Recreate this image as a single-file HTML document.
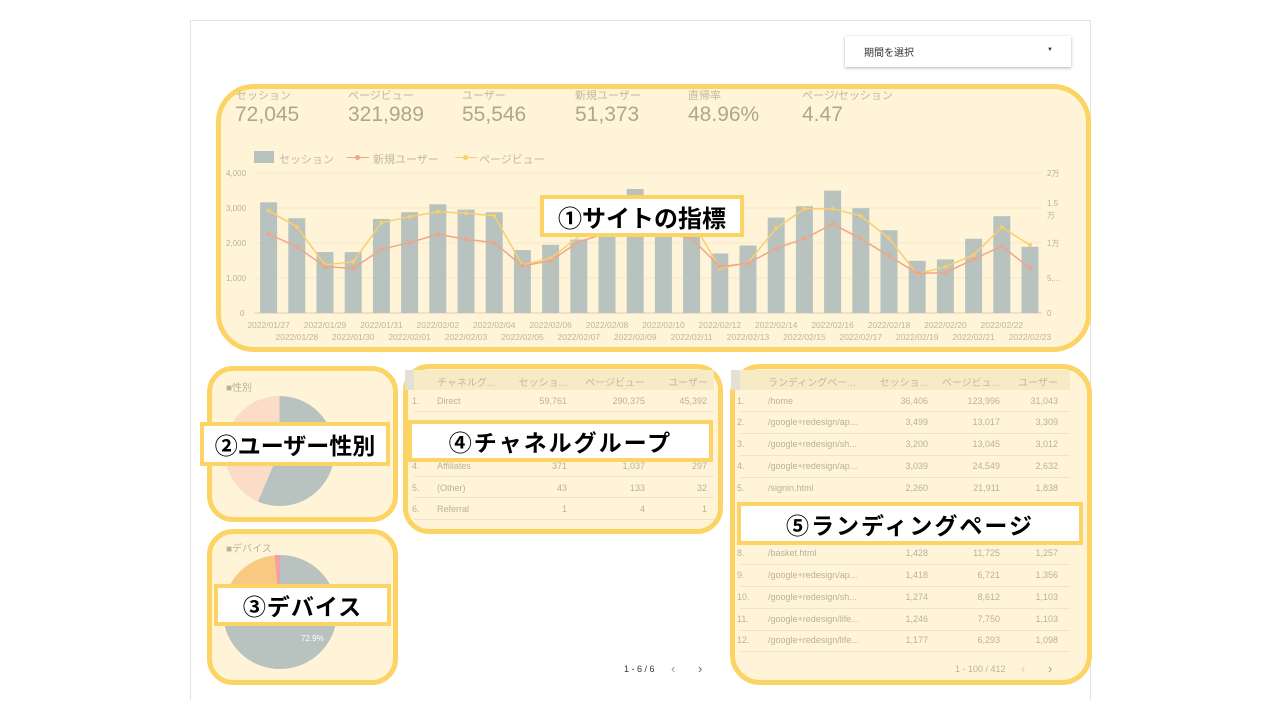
<!DOCTYPE html>
<html><head><meta charset="utf-8"><style>
*{margin:0;padding:0;box-sizing:border-box}
body{width:1280px;height:720px;background:#fff;position:relative;overflow:hidden;font-family:"Liberation Sans","Noto Sans CJK JP",sans-serif}
.a{position:absolute}
.box{position:absolute;background:#fff4d8;border:5px solid #fcd465}
.lbl{position:absolute;background:#fff;border:4px solid #fcd465;font-weight:bold;color:#000;font-size:23px;display:flex;align-items:center;justify-content:center;font-family:"Liberation Sans","Noto Sans CJK JP",sans-serif;white-space:nowrap}
.t{color:#b9b19c;font-size:9px;position:absolute;white-space:nowrap}
.r{text-align:right}
.kh{color:#c0b8a2;font-size:11px;position:absolute;white-space:nowrap}
.kv{color:#aea690;font-size:21px;position:absolute}
</style></head><body>
<div class="a" style="left:190px;top:20px;width:901px;height:680px;border:1px solid #e2e2e2;border-bottom:none"></div>
<div class="a" style="left:845px;top:36px;width:226px;height:31px;background:#fff;box-shadow:0 1px 3px rgba(0,0,0,.3);font-size:10px;color:#333;padding:8px 0 0 19px">期間を選択<span style="position:absolute;right:18px;top:11px;font-size:6px">▼</span></div>

<div class="box" style="left:216px;top:84px;width:875px;height:268px;border-radius:38px"></div>
<div class="box" style="left:207px;top:366px;width:191px;height:156px;border-radius:26px"></div>
<div class="box" style="left:207px;top:529px;width:191px;height:156px;border-radius:26px"></div>
<div class="box" style="left:403px;top:364px;width:320px;height:170px;border-radius:26px"></div>
<div class="box" style="left:730px;top:364px;width:362px;height:321px;border-radius:30px"></div>

<div class="kh" style="left:236px;top:87px">セッション</div><div class="kv" style="left:235px;top:103px">72,045</div>
<div class="kh" style="left:348px;top:87px">ページビュー</div><div class="kv" style="left:348px;top:103px">321,989</div>
<div class="kh" style="left:462px;top:87px">ユーザー</div><div class="kv" style="left:462px;top:103px">55,546</div>
<div class="kh" style="left:575px;top:87px">新規ユーザー</div><div class="kv" style="left:575px;top:103px">51,373</div>
<div class="kh" style="left:688px;top:87px">直帰率</div><div class="kv" style="left:688px;top:103px">48.96%</div>
<div class="kh" style="left:802px;top:87px">ページ/セッション</div><div class="kv" style="left:802px;top:103px">4.47</div>

<div class="a" style="left:254px;top:151px;width:20px;height:12px;background:#b8c2be"></div>
<div class="kh" style="left:279px;top:151px">セッション</div>
<div class="a" style="left:347px;top:157px;width:22px;height:1px;background:#f0a58a"></div><div class="a" style="left:355px;top:155px;width:5px;height:5px;border-radius:50%;background:#f0a58a"></div>
<div class="kh" style="left:373px;top:151px">新規ユーザー</div>
<div class="a" style="left:455px;top:157px;width:22px;height:1px;background:#f8cf6c"></div><div class="a" style="left:463px;top:155px;width:5px;height:5px;border-radius:50%;background:#f8cf6c"></div>
<div class="kh" style="left:479px;top:151px">ページビュー</div>

<svg class="a" style="left:0;top:0" width="1280" height="720">
<g stroke="#f3e7c8" stroke-width="1"><line x1="254" y1="173" x2="1042" y2="173"/><line x1="254" y1="208" x2="1042" y2="208"/><line x1="254" y1="243" x2="1042" y2="243"/><line x1="254" y1="278" x2="1042" y2="278"/></g>
<line x1="254" y1="313" x2="1042" y2="313" stroke="#d8d0ba"/>
<g fill="#b8c2be">
<rect x="260.1" y="202.3" width="17" height="110.7"/><rect x="288.3" y="218.2" width="17" height="94.8"/><rect x="316.5" y="252.1" width="17" height="60.9"/><rect x="344.7" y="252.1" width="17" height="60.9"/><rect x="372.9" y="218.9" width="17" height="94.1"/><rect x="401.1" y="212.2" width="17" height="100.8"/><rect x="429.3" y="204.3" width="17" height="108.7"/><rect x="457.5" y="209.6" width="17" height="103.4"/><rect x="485.7" y="212.2" width="17" height="100.8"/><rect x="513.9" y="250.1" width="17" height="62.9"/><rect x="542.1" y="244.8" width="17" height="68.2"/><rect x="570.3" y="239.5" width="17" height="73.5"/><rect x="598.5" y="232.5" width="17" height="80.5"/><rect x="626.7" y="189" width="17" height="124"/><rect x="654.9" y="232.5" width="17" height="80.5"/><rect x="683.1" y="236" width="17" height="77"/><rect x="711.3" y="253.5" width="17" height="59.5"/><rect x="739.5" y="245.5" width="17" height="67.5"/><rect x="767.7" y="217.6" width="17" height="95.4"/><rect x="795.9" y="206.2" width="17" height="106.8"/><rect x="824.1" y="190.6" width="17" height="122.4"/><rect x="852.3" y="208.2" width="17" height="104.8"/><rect x="880.5" y="230.2" width="17" height="82.8"/><rect x="908.7" y="260.8" width="17" height="52.2"/><rect x="936.9" y="259.4" width="17" height="53.6"/><rect x="965.1" y="238.8" width="17" height="74.2"/><rect x="993.3" y="216.2" width="17" height="96.8"/><rect x="1021.5" y="246.8" width="17" height="66.2"/>
</g>
<polyline fill="none" stroke="#f8cf6c" stroke-width="1.5" points="268.6,210.7 296.8,226.7 325,265 353.2,261.7 381.4,222.7 409.6,216.7 437.8,211.7 466,213.3 494.2,215.7 522.4,265 550.6,258.3 578.8,236.7 607,220 635.2,208 663.4,210 691.6,220 719.8,268.3 748,262.7 776.2,228.3 804.4,208.7 832.6,208.7 860.8,216 889,238.3 917.2,274 945.4,266.7 973.6,255 1001.8,227.3 1030,245"/>
<polyline fill="none" stroke="#f0a58a" stroke-width="1.5" points="268.6,234 296.8,246.7 325,266.7 353.2,268.3 381.4,249.3 409.6,242.7 437.8,234.3 466,239.3 494.2,242.7 522.4,266 550.6,260.7 578.8,241.7 607,233.3 635.2,226.7 663.4,233.3 691.6,238.3 719.8,266.7 748,263.3 776.2,248.3 804.4,238.7 832.6,224 860.8,238.7 889,256 917.2,273.3 945.4,272.7 973.6,259.3 1001.8,246 1030,268.3"/>
<g fill="#f8cf6c"><circle cx="268.6" cy="210.7" r="2"/><circle cx="296.8" cy="226.7" r="2"/><circle cx="325" cy="265" r="2"/><circle cx="353.2" cy="261.7" r="2"/><circle cx="381.4" cy="222.7" r="2"/><circle cx="409.6" cy="216.7" r="2"/><circle cx="437.8" cy="211.7" r="2"/><circle cx="466" cy="213.3" r="2"/><circle cx="494.2" cy="215.7" r="2"/><circle cx="522.4" cy="265" r="2"/><circle cx="550.6" cy="258.3" r="2"/><circle cx="719.8" cy="268.3" r="2"/><circle cx="748" cy="262.7" r="2"/><circle cx="776.2" cy="228.3" r="2"/><circle cx="804.4" cy="208.7" r="2"/><circle cx="832.6" cy="208.7" r="2"/><circle cx="860.8" cy="216" r="2"/><circle cx="889" cy="238.3" r="2"/><circle cx="917.2" cy="274" r="2"/><circle cx="945.4" cy="266.7" r="2"/><circle cx="973.6" cy="255" r="2"/><circle cx="1001.8" cy="227.3" r="2"/><circle cx="1030" cy="245" r="2"/></g>
<g fill="#f0a58a"><circle cx="268.6" cy="234" r="2"/><circle cx="296.8" cy="246.7" r="2"/><circle cx="325" cy="266.7" r="2"/><circle cx="353.2" cy="268.3" r="2"/><circle cx="381.4" cy="249.3" r="2"/><circle cx="409.6" cy="242.7" r="2"/><circle cx="437.8" cy="234.3" r="2"/><circle cx="466" cy="239.3" r="2"/><circle cx="494.2" cy="242.7" r="2"/><circle cx="522.4" cy="266" r="2"/><circle cx="550.6" cy="260.7" r="2"/><circle cx="719.8" cy="266.7" r="2"/><circle cx="748" cy="263.3" r="2"/><circle cx="776.2" cy="248.3" r="2"/><circle cx="804.4" cy="238.7" r="2"/><circle cx="832.6" cy="224" r="2"/><circle cx="860.8" cy="238.7" r="2"/><circle cx="889" cy="256" r="2"/><circle cx="917.2" cy="273.3" r="2"/><circle cx="945.4" cy="272.7" r="2"/><circle cx="973.6" cy="259.3" r="2"/><circle cx="1001.8" cy="246" r="2"/><circle cx="1030" cy="268.3" r="2"/></g>
<g fill="#b9b19c" font-size="8" font-family="Liberation Sans">
<text x="226" y="176">4,000</text><text x="226" y="211">3,000</text><text x="226" y="246">2,000</text><text x="226" y="281">1,000</text><text x="240" y="316">0</text>
<text x="1047" y="176">2万</text><text x="1047" y="206">1.5</text><text x="1047" y="218">万</text><text x="1047" y="246">1万</text><text x="1047" y="281">5,...</text><text x="1047" y="316">0</text>
</g>
<g fill="#bdb59f" font-size="8.5" font-family="Liberation Sans" text-anchor="middle">
<text x="268.6" y="328">2022/01/27</text><text x="325" y="328">2022/01/29</text><text x="381.4" y="328">2022/01/31</text><text x="437.8" y="328">2022/02/02</text><text x="494.2" y="328">2022/02/04</text><text x="550.6" y="328">2022/02/06</text><text x="607" y="328">2022/02/08</text><text x="663.4" y="328">2022/02/10</text><text x="719.8" y="328">2022/02/12</text><text x="776.2" y="328">2022/02/14</text><text x="832.6" y="328">2022/02/16</text><text x="889" y="328">2022/02/18</text><text x="945.4" y="328">2022/02/20</text><text x="1001.8" y="328">2022/02/22</text>
<text x="296.8" y="340">2022/01/28</text><text x="353.2" y="340">2022/01/30</text><text x="409.6" y="340">2022/02/01</text><text x="466" y="340">2022/02/03</text><text x="522.4" y="340">2022/02/05</text><text x="578.8" y="340">2022/02/07</text><text x="635.2" y="340">2022/02/09</text><text x="691.6" y="340">2022/02/11</text><text x="748" y="340">2022/02/13</text><text x="804.4" y="340">2022/02/15</text><text x="860.8" y="340">2022/02/17</text><text x="917.2" y="340">2022/02/19</text><text x="973.6" y="340">2022/02/21</text><text x="1030" y="340">2022/02/23</text>
</g>
<circle cx="279.5" cy="451" r="55" fill="#fbdcc6"/>
<path d="M279.5,451 L279.5,396 A55,55 0 1,1 258,501.6 Z" fill="#b8c2be"/>
<circle cx="280" cy="612" r="57" fill="#f9c982"/>
<path d="M280,612 L280,555 A57,57 0 1,1 223.5,619.5 Z" fill="#b8c2be"/>
<path d="M280,612 L274.6,555.3 A57,57 0 0,1 280,555 Z" fill="#f2a0a8"/>
<text x="301" y="641" fill="#fff" font-size="8" font-family="Liberation Sans">72.9%</text>
</svg>
<div class="t" style="left:226px;top:379px;font-size:10px">■性別</div>
<div class="t" style="left:226px;top:540px;font-size:10px">■デバイス</div>

<div class="a" style="left:405px;top:370px;width:14px;height:20px;background:#e4e0d4"></div>
<div class="a" style="left:414px;top:370px;width:300px;height:20px;background:#f7ebc6"></div>
<div class="kh" style="left:437px;top:374px;font-size:10px">チャネルグ...</div><div class="kh r" style="left:505px;top:374px;width:62px;font-size:10px">セッショ...</div><div class="kh r" style="left:575px;top:374px;width:70px;font-size:10px">ページビュー</div><div class="kh r" style="left:655px;top:374px;width:53px;font-size:10px">ユーザー</div>
<div class="t" style="left:412px;top:396px">1.</div><div class="t" style="left:437px;top:396px">Direct</div><div class="t r" style="left:507px;top:396px;width:60px">59,761</div><div class="t r" style="left:585px;top:396px;width:60px">290,375</div><div class="t r" style="left:647px;top:396px;width:60px">45,392</div>
<div class="t" style="left:412px;top:461px">4.</div><div class="t" style="left:437px;top:461px">Affiliates</div><div class="t r" style="left:507px;top:461px;width:60px">371</div><div class="t r" style="left:585px;top:461px;width:60px">1,037</div><div class="t r" style="left:647px;top:461px;width:60px">297</div>
<div class="t" style="left:412px;top:483px">5.</div><div class="t" style="left:437px;top:483px">(Other)</div><div class="t r" style="left:507px;top:483px;width:60px">43</div><div class="t r" style="left:585px;top:483px;width:60px">133</div><div class="t r" style="left:647px;top:483px;width:60px">32</div>
<div class="t" style="left:412px;top:504px">6.</div><div class="t" style="left:437px;top:504px">Referral</div><div class="t r" style="left:507px;top:504px;width:60px">1</div><div class="t r" style="left:585px;top:504px;width:60px">4</div><div class="t r" style="left:647px;top:504px;width:60px">1</div>
<div class="a" style="left:414px;top:411px;width:300px;height:1px;background:#f0e4c4"></div><div class="a" style="left:414px;top:476px;width:300px;height:1px;background:#f0e4c4"></div><div class="a" style="left:414px;top:497px;width:300px;height:1px;background:#f0e4c4"></div><div class="a" style="left:414px;top:519px;width:300px;height:1px;background:#f0e4c4"></div>
<div class="a" style="left:624px;top:664px;font-size:9px;color:#333">1 - 6 / 6</div>
<div class="a" style="left:671px;top:661px;font-size:13px;color:#999">‹</div><div class="a" style="left:698px;top:661px;font-size:13px;color:#666">›</div>

<div class="a" style="left:731px;top:370px;width:30px;height:20px;background:#e4e0d4"></div>
<div class="a" style="left:740px;top:370px;width:330px;height:20px;background:#f7ebc6"></div>
<div class="kh" style="left:768px;top:374px;font-size:10px">ランディングペー...</div><div class="kh r" style="left:860px;top:374px;width:68px;font-size:10px">セッショ...</div><div class="kh r" style="left:930px;top:374px;width:70px;font-size:10px">ページビュ...</div><div class="kh r" style="left:1005px;top:374px;width:53px;font-size:10px">ユーザー</div>
<div class="t" style="left:737px;top:396px">1.</div><div class="t" style="left:768px;top:396px">/home</div><div class="t r" style="left:868px;top:396px;width:60px">36,406</div><div class="t r" style="left:940px;top:396px;width:60px">123,996</div><div class="t r" style="left:998px;top:396px;width:60px">31,043</div>
<div class="t" style="left:737px;top:417px">2.</div><div class="t" style="left:768px;top:417px">/google+redesign/ap...</div><div class="t r" style="left:868px;top:417px;width:60px">3,499</div><div class="t r" style="left:940px;top:417px;width:60px">13,017</div><div class="t r" style="left:998px;top:417px;width:60px">3,309</div>
<div class="t" style="left:737px;top:439px">3.</div><div class="t" style="left:768px;top:439px">/google+redesign/sh...</div><div class="t r" style="left:868px;top:439px;width:60px">3,200</div><div class="t r" style="left:940px;top:439px;width:60px">13,045</div><div class="t r" style="left:998px;top:439px;width:60px">3,012</div>
<div class="t" style="left:737px;top:461px">4.</div><div class="t" style="left:768px;top:461px">/google+redesign/ap...</div><div class="t r" style="left:868px;top:461px;width:60px">3,039</div><div class="t r" style="left:940px;top:461px;width:60px">24,549</div><div class="t r" style="left:998px;top:461px;width:60px">2,632</div>
<div class="t" style="left:737px;top:483px">5.</div><div class="t" style="left:768px;top:483px">/signin.html</div><div class="t r" style="left:868px;top:483px;width:60px">2,260</div><div class="t r" style="left:940px;top:483px;width:60px">21,911</div><div class="t r" style="left:998px;top:483px;width:60px">1,838</div>
<div class="t" style="left:737px;top:548px">8.</div><div class="t" style="left:768px;top:548px">/basket.html</div><div class="t r" style="left:868px;top:548px;width:60px">1,428</div><div class="t r" style="left:940px;top:548px;width:60px">11,725</div><div class="t r" style="left:998px;top:548px;width:60px">1,257</div>
<div class="t" style="left:737px;top:570px">9.</div><div class="t" style="left:768px;top:570px">/google+redesign/ap...</div><div class="t r" style="left:868px;top:570px;width:60px">1,418</div><div class="t r" style="left:940px;top:570px;width:60px">6,721</div><div class="t r" style="left:998px;top:570px;width:60px">1,356</div>
<div class="t" style="left:737px;top:592px">10.</div><div class="t" style="left:768px;top:592px">/google+redesign/sh...</div><div class="t r" style="left:868px;top:592px;width:60px">1,274</div><div class="t r" style="left:940px;top:592px;width:60px">8,612</div><div class="t r" style="left:998px;top:592px;width:60px">1,103</div>
<div class="t" style="left:737px;top:614px">11.</div><div class="t" style="left:768px;top:614px">/google+redesign/life...</div><div class="t r" style="left:868px;top:614px;width:60px">1,246</div><div class="t r" style="left:940px;top:614px;width:60px">7,750</div><div class="t r" style="left:998px;top:614px;width:60px">1,103</div>
<div class="t" style="left:737px;top:635px">12.</div><div class="t" style="left:768px;top:635px">/google+redesign/life...</div><div class="t r" style="left:868px;top:635px;width:60px">1,177</div><div class="t r" style="left:940px;top:635px;width:60px">6,293</div><div class="t r" style="left:998px;top:635px;width:60px">1,098</div>
<div class="a" style="left:740px;top:411px;width:330px;height:1px;background:#f0e4c4"></div><div class="a" style="left:740px;top:433px;width:330px;height:1px;background:#f0e4c4"></div><div class="a" style="left:740px;top:455px;width:330px;height:1px;background:#f0e4c4"></div><div class="a" style="left:740px;top:477px;width:330px;height:1px;background:#f0e4c4"></div><div class="a" style="left:740px;top:564px;width:330px;height:1px;background:#f0e4c4"></div><div class="a" style="left:740px;top:586px;width:330px;height:1px;background:#f0e4c4"></div><div class="a" style="left:740px;top:608px;width:330px;height:1px;background:#f0e4c4"></div><div class="a" style="left:740px;top:630px;width:330px;height:1px;background:#f0e4c4"></div><div class="a" style="left:740px;top:651px;width:330px;height:1px;background:#f0e4c4"></div>
<div class="a" style="left:955px;top:664px;font-size:9px;color:#b9b19c">1 - 100 / 412</div>
<div class="a" style="left:1021px;top:661px;font-size:13px;color:#d8d0ba">‹</div><div class="a" style="left:1048px;top:661px;font-size:13px;color:#999">›</div>

<div class="lbl" style="left:540px;top:195px;width:204px;height:42px;font-size:24px">①サイトの指標</div>
<div class="lbl" style="left:200px;top:422px;width:190px;height:44px">②ユーザー性別</div>
<div class="lbl" style="left:214px;top:584px;width:177px;height:42px;letter-spacing:1px">③デバイス</div>
<div class="lbl" style="left:408px;top:420px;width:305px;height:42px;letter-spacing:2px">④チャネルグループ</div>
<div class="lbl" style="left:737px;top:502px;width:346px;height:43px;letter-spacing:2px">⑤ランディングページ</div>
</body></html>
